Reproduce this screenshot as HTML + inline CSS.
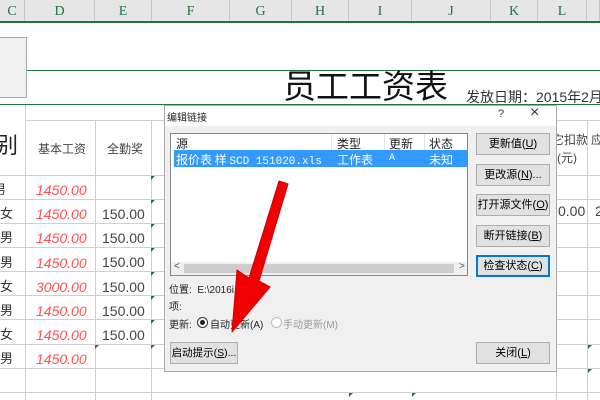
<!DOCTYPE html>
<html><head><meta charset="utf-8"><style>
body{margin:0;width:600px;height:400px;overflow:hidden;background:#fff;font-family:"Liberation Sans","Noto Sans CJK SC",sans-serif;position:relative}
.a{position:absolute}
.hd{top:0;height:22px;background:#e6e6e6;border-right:1px solid #c8c8c8;color:#217346;font:14px "Liberation Serif",serif;text-align:center;line-height:24px;box-sizing:border-box}
.vl{position:absolute;width:1px;background:#d0d0d0}
.hl{position:absolute;height:1px;background:#d0d0d0}
.red{color:#ff5050;font-style:italic;font-size:14px}
.n{color:#444;font-size:14px}
.btn{position:absolute;left:476px;width:74px;height:22px;background:#e1e1e1;border:1px solid #adadad;box-sizing:border-box;font-size:11px;text-align:center;line-height:20px;color:#000;white-space:nowrap}
.gt{position:absolute;width:0;height:0;border-top:4px solid #1f7d2f;border-right:4px solid transparent}
</style></head><body>
<div class="a hd" style="left:0;width:25px">C</div>
<div class="a hd" style="left:25px;width:70px">D</div>
<div class="a hd" style="left:95px;width:57px">E</div>
<div class="a hd" style="left:152px;width:78px">F</div>
<div class="a hd" style="left:230px;width:62px">G</div>
<div class="a hd" style="left:292px;width:57px">H</div>
<div class="a hd" style="left:349px;width:63px">I</div>
<div class="a hd" style="left:412px;width:79px">J</div>
<div class="a hd" style="left:491px;width:47px">K</div>
<div class="a hd" style="left:538px;width:49px">L</div>
<div class="a hd" style="left:587px;width:13px"></div>
<div class="a" style="left:0;top:21px;width:600px;height:2px;background:#217346"></div>
<div class="a" style="left:0;top:37px;width:26px;height:59px;background:#f0f0f0;border:1px solid #aaa;border-left:none"></div>
<div class="a" style="left:27px;top:70px;width:573px;height:1px;background:#217346"></div>
<div class="a" style="left:0;top:104px;width:600px;height:1px;background:#217346"></div>
<div class="a" style="left:283px;top:67px;font-size:33px;line-height:40px;color:#111;white-space:nowrap">员工工资表</div>
<div class="a" style="left:466px;top:87px;font-size:14px;color:#333;white-space:nowrap">发放日期：2015年2月</div>
<!-- grid -->
<div class="vl" style="left:25px;top:105px;height:295px"></div>
<div class="vl" style="left:95px;top:120px;height:280px"></div>
<div class="vl" style="left:151px;top:120px;height:280px"></div>
<div class="vl" style="left:556px;top:120px;height:280px"></div>
<div class="vl" style="left:587px;top:120px;height:280px"></div>
<div class="hl" style="left:25px;top:120px;width:140px"></div>
<div class="hl" style="left:556px;top:120px;width:44px"></div>
<div class="hl" style="left:0;top:175px;width:165px"></div>
<div class="hl" style="left:0;top:199px;width:165px"></div>
<div class="hl" style="left:0;top:223px;width:165px"></div>
<div class="hl" style="left:0;top:247px;width:165px"></div>
<div class="hl" style="left:0;top:271px;width:165px"></div>
<div class="hl" style="left:0;top:295px;width:165px"></div>
<div class="hl" style="left:0;top:319px;width:165px"></div>
<div class="hl" style="left:0;top:344px;width:165px"></div>
<div class="hl" style="left:0;top:368px;width:600px"></div>
<div class="hl" style="left:0;top:392px;width:600px"></div>
<div class="hl" style="left:556px;top:175px;width:44px"></div>
<div class="hl" style="left:556px;top:199px;width:44px"></div>
<div class="hl" style="left:556px;top:223px;width:44px"></div>
<div class="hl" style="left:556px;top:247px;width:44px"></div>
<div class="hl" style="left:556px;top:271px;width:44px"></div>
<div class="hl" style="left:556px;top:295px;width:44px"></div>
<div class="hl" style="left:556px;top:319px;width:44px"></div>
<div class="hl" style="left:556px;top:344px;width:44px"></div>
<div class="a" style="left:-4px;top:128px;font-size:22px;color:#222">别</div>
<div class="a" style="left:38px;top:140px;font-size:12px;color:#444">基本工资</div>
<div class="a" style="left:107px;top:140px;font-size:12px;color:#444">全勤奖</div>
<div class="a" style="left:557px;top:131px;width:30px;overflow:hidden;font-size:12px;color:#444;line-height:18px;white-space:nowrap"><span style="margin-left:-5px">它扣款</span><br>(元)</div>
<div class="a" style="left:591px;top:131px;font-size:12px;color:#444">应</div>
<div class="a n" style="left:558px;top:203px">0.00</div>
<div class="a n" style="left:595px;top:203px">2</div>
<div class="a" style="left:0;top:178px;font-size:13px;color:#333;line-height:24.2px;width:16px;overflow:hidden;text-indent:-7px">男<br>女<br>男<br>男<br>女<br>男<br>女<br>男</div>
<div class="a red" style="left:36px;top:178px;line-height:24.2px">1450.00<br>1450.00<br>1450.00<br>1450.00<br>3000.00<br>1450.00<br>1450.00<br>1450.00</div>
<div class="a n" style="left:102px;top:202px;line-height:24.2px">150.00<br>150.00<br>150.00<br>150.00<br>150.00<br>150.00</div>
<div class="gt" style="left:151px;top:176px"></div><div class="gt" style="left:151px;top:200px"></div><div class="gt" style="left:151px;top:224px"></div><div class="gt" style="left:151px;top:248px"></div><div class="gt" style="left:151px;top:272px"></div><div class="gt" style="left:151px;top:296px"></div><div class="gt" style="left:151px;top:320px"></div><div class="gt" style="left:95px;top:345px"></div><div class="gt" style="left:151px;top:345px"></div>
<div class="gt" style="left:588px;top:345px"></div><div class="gt" style="left:588px;top:369px"></div><div class="gt" style="left:349px;top:393px"></div><div class="gt" style="left:412px;top:393px"></div>
<!-- dialog -->
<div class="a" style="left:164px;top:105px;width:393px;height:267px;background:#f0f0f0;border:1px solid #aaa;box-sizing:border-box"></div>
<div class="a" style="left:165px;top:106px;width:391px;height:20px;background:#fff"></div>
<div class="a" style="left:167px;top:109px;font-size:10px;color:#222">编辑链接</div>
<div class="a" style="left:498px;top:108px;font-size:11px;color:#333">?</div>
<div class="a" style="left:530px;top:104px;font-size:16px;color:#333">×</div>
<div class="a" style="left:170px;top:133px;width:298px;height:143px;background:#fff;border:1px solid #828790;box-sizing:border-box"></div>
<div class="a" style="left:331px;top:134px;width:1px;height:16px;background:#e5e5e5"></div>
<div class="a" style="left:384px;top:134px;width:1px;height:16px;background:#e5e5e5"></div>
<div class="a" style="left:424px;top:134px;width:1px;height:16px;background:#e5e5e5"></div>
<div class="a" style="left:176px;top:135px;font-size:12px;color:#222">源</div>
<div class="a" style="left:337px;top:135px;font-size:12px;color:#222">类型</div>
<div class="a" style="left:389px;top:135px;font-size:12px;color:#222">更新</div>
<div class="a" style="left:429px;top:135px;font-size:12px;color:#222">状态</div>
<div class="a" style="left:174px;top:150px;width:293px;height:17px;background:#3399ff"></div>
<div class="a" style="left:176px;top:151px;font:12px 'Noto Sans CJK SC',sans-serif;color:#fff;white-space:pre">报价表 样 <span style="font:11px 'Liberation Mono',monospace">SCD 151020.xls</span></div>
<div class="a" style="left:337px;top:151px;font-size:12px;color:#fff">工作表</div>
<div class="a" style="left:389px;top:153px;font:10px 'Liberation Mono',monospace;color:#fff">A</div>
<div class="a" style="left:429px;top:151px;font-size:12px;color:#fff">未知</div>
<div class="a" style="left:171px;top:262px;width:296px;height:13px;background:#f0f0f0"></div>
<div class="a" style="left:184px;top:264px;width:270px;height:9px;background:#cdcdcd"></div>
<div class="a" style="left:174px;top:261px;font-size:10px;color:#555">&lt;</div>
<div class="a" style="left:459px;top:261px;font-size:10px;color:#555">&gt;</div>
<div class="btn" style="top:133px">更新值(<u>U</u>)</div>
<div class="btn" style="top:164px">更改源(<u>N</u>)...</div>
<div class="btn" style="top:194px">打开源文件(<u>O</u>)</div>
<div class="btn" style="top:225px">断开链接(<u>B</u>)</div>
<div class="btn" style="top:255px;border:2px solid #0078d7;line-height:18px">检查状态(<u>C</u>)</div>
<div class="btn" style="top:342px">关闭(<u>L</u>)</div>
<div class="btn" style="left:170px;width:68px;top:342px;font-size:10.5px">启动提示(<u>S</u>)...</div>
<div class="a" style="left:169px;top:281px;font-size:10px;color:#222;white-space:pre">位置:  E:\2016i       月</div>
<div class="a" style="left:169px;top:298px;font-size:10px;color:#222">项:</div>
<div class="a" style="left:169px;top:316px;font-size:10px;color:#222">更新:</div>
<div class="a" style="left:197px;top:317px;width:9px;height:9px;border:1px solid #333;border-radius:50%;background:#fff"></div>
<div class="a" style="left:200px;top:320px;width:5px;height:5px;border-radius:50%;background:#222"></div>
<div class="a" style="left:210px;top:316px;font-size:10px;color:#222">自动更新(A)</div>
<div class="a" style="left:271px;top:317px;width:9px;height:9px;border:1px solid #bbb;border-radius:50%;background:#fff"></div>
<div class="a" style="left:283px;top:316px;font-size:10px;color:#999">手动更新(M)</div>
<!-- arrow -->
<svg class="a" style="left:0;top:0" width="600" height="400">
<polygon points="279,181 288,184 259,281 270,287 232,332 237,270 249,278" fill="#f00000" stroke="#d00000" stroke-width="1" stroke-linejoin="round"/>
</svg>
</body></html>
